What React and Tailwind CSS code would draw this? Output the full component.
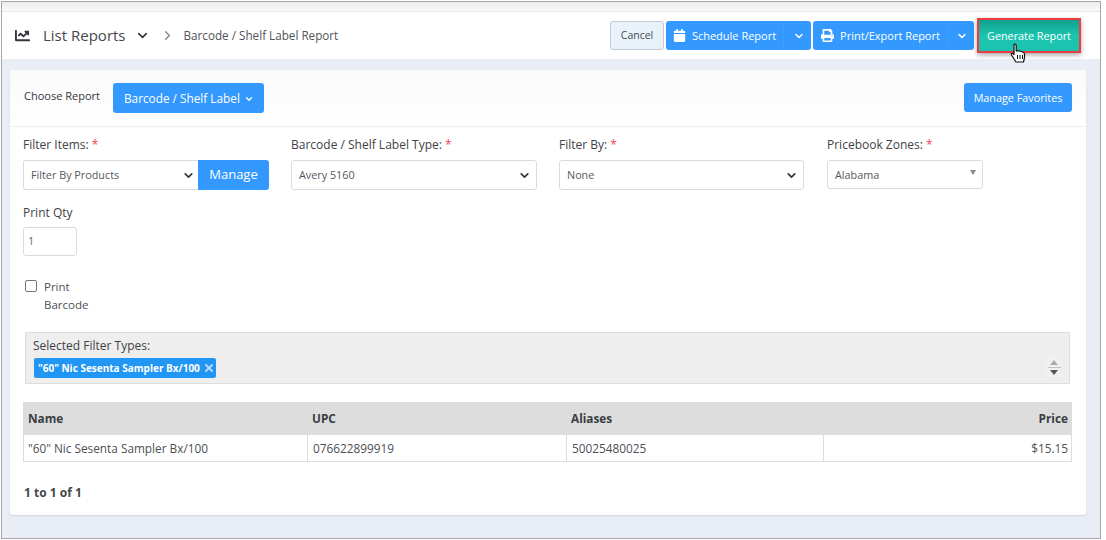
import React from 'react';
import { ChevronDown, ChevronRight, X } from 'lucide-react';
import { FaCalendar, FaPrint, FaChartLine } from 'react-icons/fa';

const Req = () => <span className="text-[#f04359] ml-[3px]">*</span>;

function Picker({ label, value, width }) {
  return (
    <div className={`flex flex-col ${width}`}>
      <div className="h-[16px] leading-[16px] text-[12px] text-[#3e4246] mb-[7px] whitespace-nowrap">{label}<Req /></div>
      <div className="h-[30px] border border-[#d8dbe0] rounded-[3px] bg-white flex items-center justify-between pl-[7px] pr-[5px] text-[10.8px] text-[#55595e]">
        <span>{value}</span>
        <ChevronDown size={13} strokeWidth={3.2} className="text-[#33373b]" />
      </div>
    </div>
  );
}

function SplitButton({ icon, text, width, textWidth }) {
  return (
    <div className={`h-[29px] ${width} bg-[#3399ff] rounded-[3px] flex items-center text-white text-[11px]`}>
      <div className={`h-full ${textWidth} flex items-center justify-center gap-[6px] border-r border-[#3d9eff]`}>
        {icon}
        <span className="pt-[1px]">{text}</span>
      </div>
      <div className="flex-1 flex items-center justify-end pr-[6px]">
        <ChevronDown size={12} strokeWidth={3} />
      </div>
    </div>
  );
}

export default function App() {
  return (
    <div className="w-[1106px] h-[540px] bg-white overflow-hidden pt-[1px] pl-[1px]" style={{ fontFamily: '"Open Sans", sans-serif' }}>
      <div className="relative w-[1100px] h-[538px] border border-[#a6a6a6] bg-[#e9edf6] flex flex-col">
        {/* Top bar */}
        <div className="h-[10px] bg-gradient-to-b from-[#ececec] to-[#f9f9f9] border-b border-[#e8e8e8]" />
        <div className="h-[47px] bg-white flex items-center justify-between pl-[13px] pr-[19px] shrink-0">
          <div className="flex items-center text-[#45494e]">
            <FaChartLine size={15} className="text-[#33373b]" />
            <span className="ml-[13px] text-[15px] leading-none text-[#44484d]">List Reports</span>
            <ChevronDown size={15} strokeWidth={2.6} className="ml-[9px] text-[#33373b]" />
            <ChevronRight size={15} strokeWidth={2} className="ml-[10px] text-[#808488]" />
            <span className="ml-[9px] text-[11.7px] text-[#4f5358]">Barcode / Shelf Label Report</span>
          </div>
          <div className="flex items-center">
            <div className="h-[29px] w-[54px] pt-[1px] rounded-[3px] border border-[#c3ccd6] bg-[#e9f2fb] flex items-center justify-center text-[10.5px] text-[#444a52]">Cancel</div>
            <div className="ml-[2px]"><SplitButton icon={<FaCalendar size={13} />} text="Schedule Report" width="w-[145px]" textWidth="w-[118px]" /></div>
            <div className="ml-[2px]"><SplitButton icon={<FaPrint size={13} />} text="Print/Export Report" width="w-[161px]" textWidth="w-[136px]" /></div>
            <div className="ml-[3px] h-[35px] w-[104px] pt-[1px] border-2 border-[#ee3a43] bg-gradient-to-b from-[#0fa08b] via-[#1cc4b0] to-[#1cc4b0] flex items-center justify-center text-white text-[10.8px] shadow-[0_2px_5px_rgba(0,0,0,0.35)]">Generate Report</div>
          </div>
        </div>

        {/* Card */}
        <div className="ml-[8px] mt-[11px] w-[1076px] h-[445px] bg-white rounded-[3px] shadow-[0_1px_2px_rgba(0,0,0,0.1)] flex flex-col">
          <div className="h-[57px] shrink-0 border-b border-[#eceef1] bg-gradient-to-b from-[#fafafa] to-white flex items-center justify-between pl-[14px] pr-[14px] pb-[1px]">
            <div className="flex items-center">
              <span className="text-[11px] text-[#33373b] mb-[3px]">Choose Report</span>
              <div className="ml-[13px] h-[30px] w-[151px] bg-[#3399ff] rounded-[3px] flex items-center justify-center gap-[4px] text-white text-[11.8px] pt-[2px] pl-[1px]">
                Barcode / Shelf Label
                <ChevronDown size={10} strokeWidth={3} />
              </div>
            </div>
            <div className="h-[29px] w-[108px] pt-[1px] bg-[#3399ff] rounded-[3px] flex items-center justify-center text-white text-[10.8px]">Manage Favorites</div>
          </div>

          <div className="pl-[13px] pr-[14px] pt-[10px] flex flex-col">
            <div className="flex gap-[22px]">
              <div className="flex flex-col w-[246px]">
                <div className="h-[16px] leading-[16px] text-[12px] text-[#3e4246] mb-[7px]">Filter Items:<Req /></div>
                <div className="flex h-[30px]">
                  <div className="w-[175px] border border-[#d8dbe0] border-r-0 rounded-l-[3px] bg-white flex items-center justify-between pl-[7px] pr-[3px] text-[10.8px] text-[#55595e]">
                    <span>Filter By Products</span>
                    <ChevronDown size={13} strokeWidth={3.2} className="text-[#33373b]" />
                  </div>
                  <div className="flex-1 bg-[#3399ff] rounded-r-[3px] flex items-center justify-center text-white text-[13px]">Manage</div>
                </div>
              </div>
              <Picker label="Barcode / Shelf Label Type:" value="Avery 5160" width="w-[246px]" />
              <Picker label="Filter By:" value="None" width="w-[245px]" />
              <div className="flex flex-col w-[156px] ml-[1px]">
                <div className="h-[16px] leading-[16px] text-[12px] text-[#3e4246] mb-[7px] whitespace-nowrap">Pricebook Zones:<Req /></div>
                <div className="relative h-[29px] pt-[1px] border border-[#d8dbe0] rounded-[3px] bg-white flex items-center pl-[7px] text-[10.8px] text-[#55595e]">
                  Alabama
                  <span className="absolute right-[6px] top-[9px] w-0 h-0 border-x-[3px] border-x-transparent border-t-[5px] border-t-[#8a8a8a]" />
                </div>
              </div>
            </div>

            <div className="mt-[15px] h-[16px] leading-[16px] text-[12px] text-[#3e4246]">Print Qty</div>
            <div className="mt-[6px] w-[54px] h-[29px] border border-[#d8dbe0] rounded-[3px] flex items-center pl-[4px] text-[11px] text-[#6a6e73]">1</div>

            <div className="mt-[22px] ml-[2px] flex items-start">
              <div className="mt-[2px] w-[12px] h-[12px] border border-[#767676] rounded-[2px] bg-white shrink-0" />
              <div className="ml-[7px] text-[11.5px] leading-[18px] text-[#4c5055] w-[60px]">Print Barcode</div>
            </div>

            <div className="relative mt-[18px] ml-[2px] w-[1045px] h-[52px] bg-[#eeeeee] border border-[#dedede] pl-[7px] pt-[4px]">
              <div className="text-[12px] leading-[17px] text-[#3e4246]">Selected Filter Types:</div>
              <div className="mt-[4px] ml-[1px] h-[20px] w-[182px] bg-[#2196f3] rounded-[2px] flex items-center pl-[4px] text-white text-[10px] font-bold whitespace-nowrap">
                "60" Nic Sesenta Sampler Bx/100
                <X size={12} strokeWidth={4} className="ml-[3px] text-[#b9dcfa]" />
              </div>
              <div className="absolute right-[7px] bottom-[5px] w-[16px] h-[22px] flex flex-col items-center justify-center gap-[2px] bg-[#f0f0f0]">
                <span className="w-0 h-0 border-x-[4px] border-x-transparent border-b-[5px] border-b-[#a9a9a9]" />
                <span className="w-[13px] h-px bg-[#c0c0c0]" />
                <span className="w-0 h-0 border-x-[4px] border-x-transparent border-t-[5px] border-t-[#555555]" />
              </div>
            </div>

            <div className="mt-[18px] w-[1049px] text-[11.8px]">
              <div className="grid grid-cols-[284px_259px_257px_249px] h-[33px] bg-[#dddddd] font-bold text-[#3a3e42] items-center">
                <div className="pl-[5px]">Name</div>
                <div className="pl-[5px]">UPC</div>
                <div className="pl-[5px]">Aliases</div>
                <div className="pr-[4px] text-right">Price</div>
              </div>
              <div className="grid grid-cols-[284px_259px_257px_249px] h-[27px] border-x border-b border-[#dddddd] text-[#4c5055] items-center">
                <div className="pl-[4px] pt-[1px] h-full flex items-center border-r border-[#dddddd]">"60" Nic Sesenta Sampler Bx/100</div>
                <div className="pl-[5px] pt-[1px] h-full flex items-center border-r border-[#dddddd]">076622899919</div>
                <div className="pl-[5px] pt-[1px] h-full flex items-center border-r border-[#dddddd]">50025480025</div>
                <div className="pr-[5px] pt-[1px] text-right">$15.15</div>
              </div>
            </div>

            <div className="mt-[23px] ml-[1px] text-[12px] leading-[16px] font-bold text-[#44484d]">1 to 1 of 1</div>
          </div>
        </div>

        {/* Mouse cursor */}
        <svg className="absolute left-[1008px] top-[41px]" width="17" height="20" viewBox="0 0 17 20">
          <path d="M4 1.5c1-.8 2.2 0 2.2 1V8l1-.3 2 .3 2 .5 2 .7c1 .5 1.3 1 1.3 2v3.5L13.5 19H6L1.5 12c-.7-1.2.5-2.2 1.6-1.4L4 11.5V2.5z" fill="#fff" stroke="#111" strokeWidth="1.2" strokeLinejoin="round" />
          <path d="M7.5 12v4M10 12v4M12.5 12v4" stroke="#111" strokeWidth="1" />
        </svg>
      </div>
    </div>
  );
}
